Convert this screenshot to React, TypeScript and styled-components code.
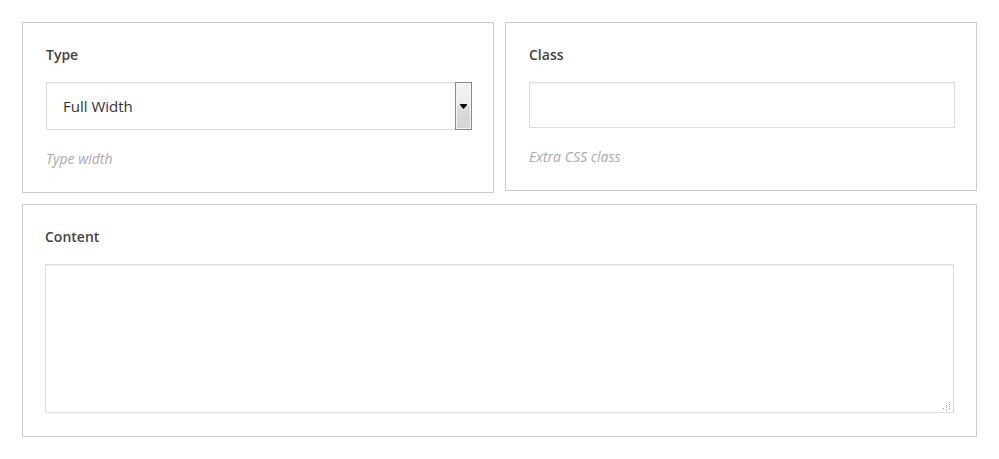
import React from "react";
import styled, { createGlobalStyle } from "styled-components";

const GlobalStyle = createGlobalStyle`
  html, body {
    margin: 0;
    padding: 0;
    background: #ffffff;
  }
  body {
    font-family: "Open Sans", "Liberation Sans", sans-serif;
    color: #444444;
  }
`;

const Page = styled.div`
  padding: 22px 22px 0 22px;
  width: 955px;
  display: flex;
  flex-direction: column;
  gap: 11px;
`;

const Row = styled.div`
  display: flex;
  align-items: flex-start;
  gap: 11px;
`;

const Panel = styled.div<{ $wide?: boolean }>`
  box-sizing: border-box;
  width: ${(p) => (p.$wide ? "955px" : "472px")};
  border: 1px solid #cccccc;
  padding: ${(p) => (p.$wide ? "22px 22px 23px 22px" : "22px 21px 23px 23px")};
  display: flex;
  flex-direction: column;
`;

const Label = styled.div`
  font-size: 14px;
  line-height: 20px;
  font-weight: 600;
  color: #444444;
  margin-bottom: 17px;
`;

const Hint = styled.div`
  font-size: 14px;
  line-height: 20px;
  font-style: italic;
  color: #aaaaaa;
  margin-top: 19px;
`;

const SelectBox = styled.div`
  box-sizing: border-box;
  height: 48px;
  border: 1px solid #dddddd;
  box-shadow: inset 0 1px 2px rgba(0, 0, 0, 0.06);
  display: flex;
  align-items: center;
`;

const SelectValue = styled.span`
  flex: 1;
  padding-left: 16px;
  font-size: 15px;
  color: #333333;
`;

const ArrowButton = styled.span`
  box-sizing: border-box;
  align-self: stretch;
  width: 17px;
  margin: -1px -1px -1px 0;
  border: 1px solid #8a8a8a;
  box-shadow: inset 0 0 0 1px #f4f4f4;
  background: linear-gradient(
    to bottom,
    #f3f3f3 0%,
    #ebebeb 50%,
    #dcdcdc 51%,
    #d4d4d4 100%
  );
  display: flex;
  align-items: center;
  justify-content: center;
`;

const TextInput = styled.input`
  box-sizing: border-box;
  width: 100%;
  height: 46px;
  margin: 0;
  border: 1px solid #dddddd;
  box-shadow: inset 0 1px 2px rgba(0, 0, 0, 0.06);
  outline: none;
  padding: 0 12px;
  font-family: inherit;
  font-size: 15px;
  background: #ffffff;
`;

const AreaWrap = styled.div`
  position: relative;
`;

const TextArea = styled.textarea`
  display: block;
  box-sizing: border-box;
  width: 100%;
  height: 149px;
  margin: 0;
  border: 1px solid #dddddd;
  box-shadow: inset 0 1px 2px rgba(0, 0, 0, 0.06);
  outline: none;
  resize: none;
  padding: 8px 12px;
  font-family: inherit;
  font-size: 15px;
`;

const Grip = styled.svg`
  position: absolute;
  right: 3px;
  bottom: 3px;
`;

const ArrowIcon = () => (
  <svg width="7" height="5" viewBox="0 0 7 5">
    <path d="M0 0h7v1l-3.5 4L0 1z" fill="#000" />
  </svg>
);

const GripIcon = () => (
  <Grip width="8" height="8" viewBox="0 0 8 8">
    {[
      [6, 0],
      [6, 2],
      [6, 4],
      [6, 6],
      [3, 3],
      [3, 5],
      [3, 7],
      [0, 6],
    ].map(([x, y], i) => (
      <rect key={i} x={x} y={y} width="1" height="1" fill="#a0a0a0" />
    ))}
  </Grip>
);

export default function App() {
  return (
    <>
      <GlobalStyle />
      <Page>
        <Row>
          <Panel>
            <Label>Type</Label>
            <SelectBox>
              <SelectValue>Full Width</SelectValue>
              <ArrowButton>
                <ArrowIcon />
              </ArrowButton>
            </SelectBox>
            <Hint>Type width</Hint>
          </Panel>
          <Panel>
            <Label>Class</Label>
            <TextInput type="text" defaultValue="" />
            <Hint>Extra CSS class</Hint>
          </Panel>
        </Row>
        <Panel $wide>
          <Label>Content</Label>
          <AreaWrap>
            <TextArea defaultValue="" />
            <GripIcon />
          </AreaWrap>
        </Panel>
      </Page>
    </>
  );
}
